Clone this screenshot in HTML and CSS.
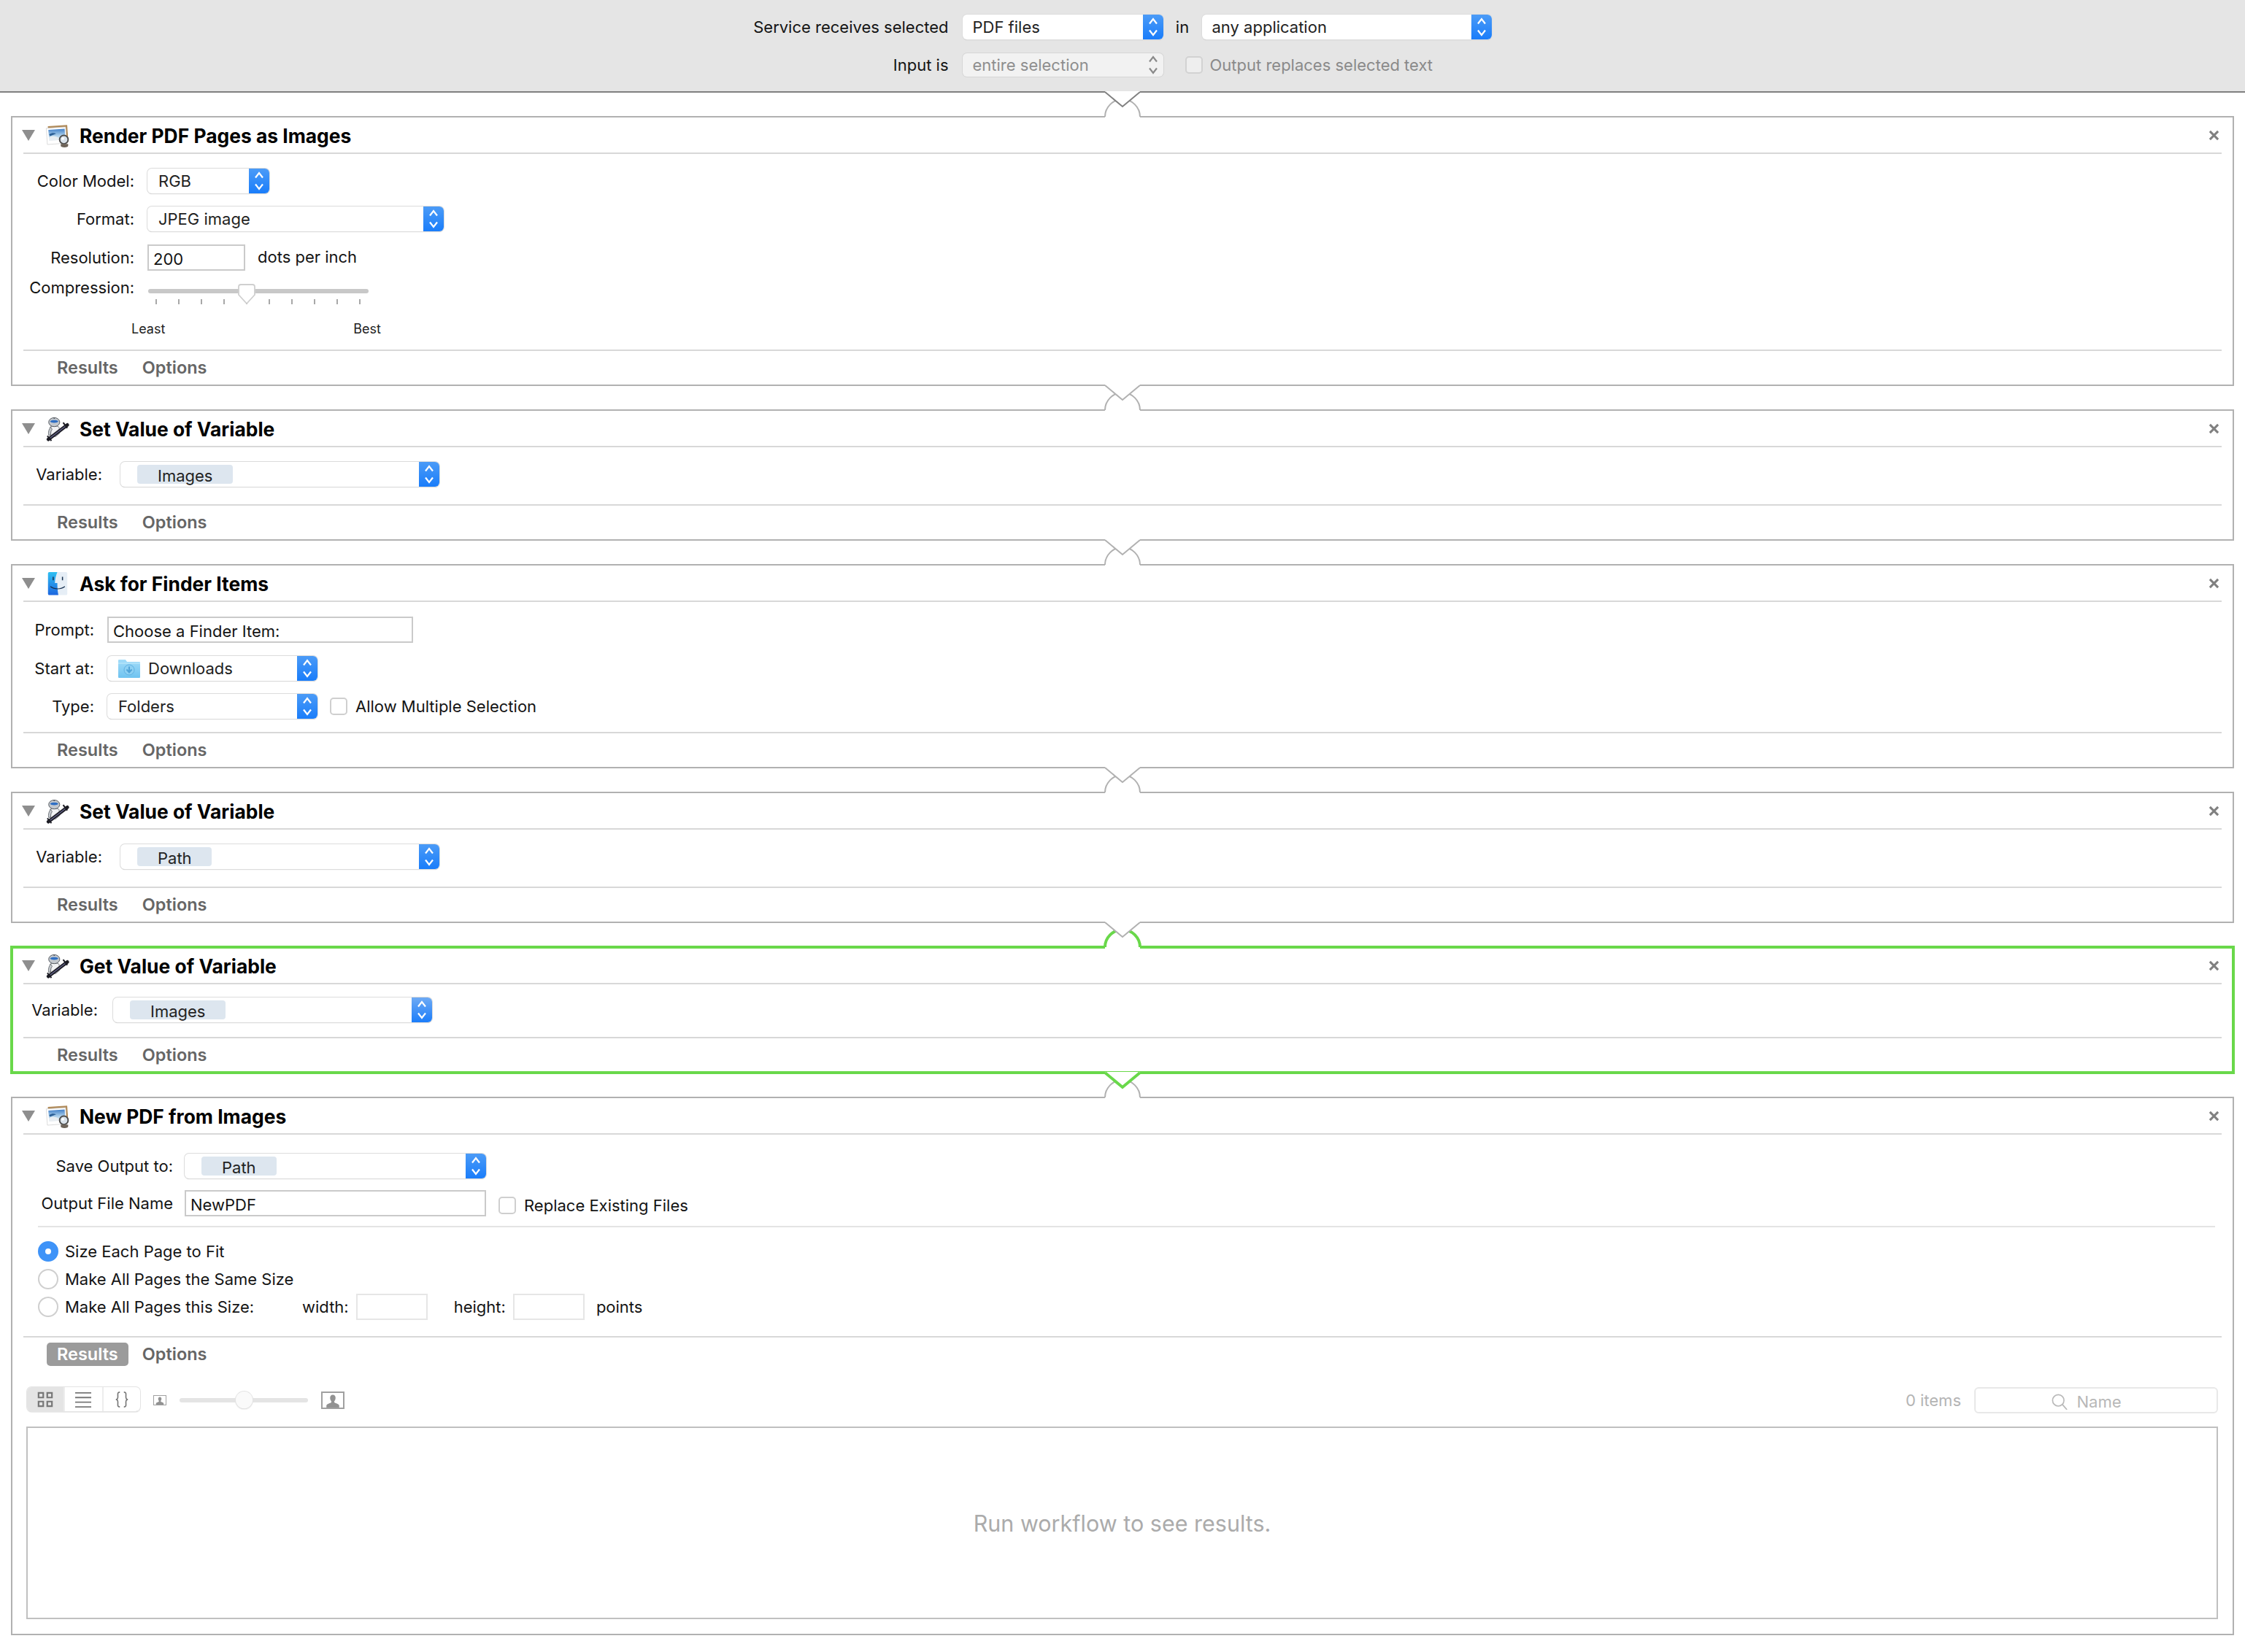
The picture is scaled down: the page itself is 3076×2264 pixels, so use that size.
FILE: index.html
```html
<!DOCTYPE html>
<html lang="en">
<head>
<meta charset="utf-8">
<title>Automator Service</title>
<link rel="stylesheet" href="styles.css">
</head>
<body>
<svg class="sprite" aria-hidden="true">
  <defs>
    <linearGradient id="sky" x1="0" y1="0" x2="0" y2="1"><stop offset="0" stop-color="#3f7fc8"/><stop offset=".55" stop-color="#a9cdea"/><stop offset="1" stop-color="#f2f5f7"/></linearGradient>
    <linearGradient id="fnd" x1="0" y1="0" x2="0" y2="1"><stop offset="0" stop-color="#2fc0f2"/><stop offset="1" stop-color="#1c66e0"/></linearGradient>
    <linearGradient id="fold" x1="0" y1="0" x2="0" y2="1"><stop offset="0" stop-color="#a2dcf9"/><stop offset="1" stop-color="#6fc3f0"/></linearGradient>
    <symbol id="i-photo" viewBox="0 0 32 30">
      <rect x="4" y="2" width="25" height="21" fill="#b08a58" transform="rotate(-4 16 12)"/>
      <rect x="2" y="4.500" width="25" height="21" fill="#fff" stroke="#c9c9c9" stroke-width=".6" transform="rotate(-4 14 15)"/>
      <path d="M4 7.500 25 6l1 14-21 1.500z" fill="url(#sky)"/>
      <path d="M5 17c5-3 9-1 13 1l6 2-19 1.500z" fill="#e9eef2"/>
      <path d="M5 13c4-2 6-2 9-.5l-8 3z" fill="#2b5f96"/>
      <circle cx="24" cy="20" r="5.500" fill="#d9e2ea" stroke="#4c4c4c" stroke-width="1.800"/>
      <circle cx="22.800" cy="18.800" r="1.600" fill="#fff"/>
      <path d="M20 25.500h9.500v2.500a4.700 2 0 0 1-9.500 0z" fill="#6d6359"/>
    </symbol>
    <symbol id="i-robot" viewBox="0 0 32 36">
      <path d="M5 15c4-2 9-2 13 0l1 9-6 5-7-1z" fill="#f1f2f4" stroke="#7d8288" stroke-width="1"/>
      <path d="M6 15c-3 3-4 8-3 12l3-.5c0-3 0-6 2-8z" fill="#c4c8cd" stroke="#555a60" stroke-width=".8"/>
      <ellipse cx="11" cy="8" rx="8" ry="6.500" fill="#c3c8ce" stroke="#4f545a" stroke-width="1"/>
      <path d="M5 6.500c3-2 9-2 12 0-1 3.200-11 3.200-12 0z" fill="#2f6fc4"/>
      <path d="M11 1.500v1.800" stroke="#4f545a" stroke-width="1.500"/>
      <path d="M2.500 33 30 12" stroke="#1c1c24" stroke-width="5" stroke-linecap="round"/>
      <path d="M5 31 27.500 13.800" stroke="#66668e" stroke-width="1.300"/>
      <path d="M24 8.500l6 8" stroke="#1c1c24" stroke-width="2.200"/>
      <path d="M1 28l6 7" stroke="#1c1c24" stroke-width="2"/>
    </symbol>
    <symbol id="i-finder" viewBox="0 0 30 36">
      <rect x="1" y="1" width="28" height="33.500" rx="2" fill="#e6eef6"/>
      <path d="M3 1h11.500c-2 5-3.500 11-3.500 16h3.500c0 6 .5 12 1.500 17.500H3a2 2 0 0 1-2-2V3a2 2 0 0 1 2-2z" fill="url(#fnd)"/>
      <path d="M8.500 8v5M22 8v5" stroke="#17304f" stroke-width="1.600"/>
      <path d="M4.500 22c5.500 4.500 15 4.500 21 0" fill="none" stroke="#17304f" stroke-width="1.200"/>
    </symbol>
    <symbol id="i-step" viewBox="0 0 16 30">
      <path d="M3 10.500 8 4l5 6.500M3 19.500 8 26l5-6.500" fill="none" stroke="currentColor" stroke-width="2.200"/>
    </symbol>
    <symbol id="i-folder" viewBox="0 0 30 26">
      <path d="M0 2a1 1 0 0 1 1-1h9l2 3h17a1 1 0 0 1 1 1v20a1 1 0 0 1-1 1H1a1 1 0 0 1-1-1z" fill="url(#fold)"/>
      <path d="M0 6h30" stroke="#c4ebfc" stroke-width="1"/>
      <circle cx="15" cy="15" r="7" fill="#8dd0f3" stroke="#5fb1e2" stroke-width="1"/>
      <path d="M15 10.500v7M11.500 14.500 15 18.500l3.500-4" fill="none" stroke="#4fa3d8" stroke-width="2"/>
    </symbol>
    <symbol id="i-person" viewBox="0 0 32 24">
      <path d="M16 3c3 0 4.500 2 4.500 5 0 2.500-1 4.500-2 5.500v2c1 1 7 2 8 5v3.500h-21V20.500c1-3 7-4 8-5v-2c-1-1-2-3-2-5.500 0-3 1.500-5 4.500-5z" fill="#929292"/>
    </symbol>
    <symbol id="i-x" viewBox="0 0 16 16">
      <path d="M2 2 14 14M14 2 2 14" fill="none" stroke="#808080" stroke-width="3.200"/>
    </symbol>
  </defs>
</svg>

<header class="band">
  <div class="band-grid">
    <span class="band-label">Service receives selected</span>
    <div class="band-row">
      <div class="sel w-275"><span class="sel-val">PDF files</span><span class="sel-btn"><svg class="step"><use href="#i-step"/></svg></span></div>
      <span class="band-in">in</span>
      <div class="sel w-397"><span class="sel-val">any application</span><span class="sel-btn"><svg class="step"><use href="#i-step"/></svg></span></div>
    </div>
    <span class="band-label">Input is</span>
    <div class="band-row band-row-2">
      <div class="sel sel-off w-275 h-32"><span class="sel-val">entire selection</span><span class="sel-btn"><svg class="step"><use href="#i-step"/></svg></span></div>
      <label class="check check-off"><span class="box"></span>Output replaces selected text</label>
    </div>
  </div>
</header>

<main class="flow">

  <section class="card">
    <svg class="notch n-band" viewBox="0 0 52 38"><rect class="patch" x="2" y="0" width="48" height="38"/><path class="arc" d="M2 35C2 22 13 11 26 11s24 11 24 24"/><path class="vee" d="M2 1 26 21 50 1"/></svg>
    <div class="head">
      <span class="tri"></span>
      <svg class="ico"><use href="#i-photo"/></svg>
      <h2 class="title">Render PDF Pages as Images</h2>
      <svg class="close"><use href="#i-x"/></svg>
    </div>
    <div class="body body-render">
      <div class="row"><span class="lab l-152">Color Model:</span><div class="sel w-167"><span class="sel-val">RGB</span><span class="sel-btn"><svg class="step"><use href="#i-step"/></svg></span></div></div>
      <div class="row"><span class="lab l-152">Format:</span><div class="sel w-406"><span class="sel-val">JPEG image</span><span class="sel-btn"><svg class="step"><use href="#i-step"/></svg></span></div></div>
      <div class="row"><span class="lab l-152">Resolution:</span><input class="inp w-134" value="200"><span class="unit">dots per inch</span></div>
      <div class="row row-slider">
        <span class="lab l-152 lab-slider">Compression:</span>
        <div class="slider">
          <div class="track"><svg class="thumb" viewBox="0 0 24 28"><path d="M1 4a3 3 0 0 1 3-3h16a3 3 0 0 1 3 3v11L12 27 1 15z" fill="#fff" stroke="#cfcfcf" stroke-width="1.800"/></svg></div>
          <div class="ticks"><i></i><i></i><i></i><i></i><i></i><i></i><i></i><i></i><i></i><i></i></div>
          <div class="ends"><span>Least</span><span>Best</span></div>
        </div>
      </div>
    </div>
    <div class="foot"><span class="tab">Results</span><span class="tab">Options</span></div>
  </section>

  <section class="card">
    <svg class="notch" viewBox="0 0 52 38"><rect class="patch" x="2" y="0" width="48" height="38"/><path class="arc" d="M2 35C2 22 13 11 26 11s24 11 24 24"/><path class="vee" d="M2 1 26 21 50 1"/></svg>
    <div class="head">
      <span class="tri"></span>
      <svg class="ico"><use href="#i-robot"/></svg>
      <h2 class="title">Set Value of Variable</h2>
      <svg class="close"><use href="#i-x"/></svg>
    </div>
    <div class="body body-var">
      <div class="row g-25"><span class="lab l-108">Variable:</span><div class="sel w-437"><span class="token">Images</span><span class="sel-btn"><svg class="step"><use href="#i-step"/></svg></span></div></div>
    </div>
    <div class="foot"><span class="tab">Results</span><span class="tab">Options</span></div>
  </section>

  <section class="card">
    <svg class="notch" viewBox="0 0 52 38"><rect class="patch" x="2" y="0" width="48" height="38"/><path class="arc" d="M2 35C2 22 13 11 26 11s24 11 24 24"/><path class="vee" d="M2 1 26 21 50 1"/></svg>
    <div class="head">
      <span class="tri"></span>
      <svg class="ico"><use href="#i-finder"/></svg>
      <h2 class="title">Ask for Finder Items</h2>
      <svg class="close"><use href="#i-x"/></svg>
    </div>
    <div class="body body-ask">
      <div class="row"><span class="lab l-97">Prompt:</span><input class="inp w-419" value="Choose a Finder Item:"></div>
      <div class="row"><span class="lab l-97">Start at:</span><div class="sel w-288"><svg class="folder"><use href="#i-folder"/></svg><span class="sel-val sel-val-ico">Downloads</span><span class="sel-btn"><svg class="step"><use href="#i-step"/></svg></span></div></div>
      <div class="row"><span class="lab l-97">Type:</span><div class="sel w-288"><span class="sel-val sel-val-left">Folders</span><span class="sel-btn"><svg class="step"><use href="#i-step"/></svg></span></div><label class="check"><span class="box"></span>Allow Multiple Selection</label></div>
    </div>
    <div class="foot"><span class="tab">Results</span><span class="tab">Options</span></div>
  </section>

  <section class="card">
    <svg class="notch" viewBox="0 0 52 38"><rect class="patch" x="2" y="0" width="48" height="38"/><path class="arc" d="M2 35C2 22 13 11 26 11s24 11 24 24"/><path class="vee" d="M2 1 26 21 50 1"/></svg>
    <div class="head">
      <span class="tri"></span>
      <svg class="ico"><use href="#i-robot"/></svg>
      <h2 class="title">Set Value of Variable</h2>
      <svg class="close"><use href="#i-x"/></svg>
    </div>
    <div class="body body-var">
      <div class="row g-25"><span class="lab l-108">Variable:</span><div class="sel w-437"><span class="token token-path">Path</span><span class="sel-btn"><svg class="step"><use href="#i-step"/></svg></span></div></div>
    </div>
    <div class="foot"><span class="tab">Results</span><span class="tab">Options</span></div>
  </section>

  <section class="card card-on">
    <svg class="notch n-arc-on" viewBox="0 0 52 38"><rect class="patch" x="2" y="0" width="48" height="38"/><path class="arc" d="M2 35C2 22 13 11 26 11s24 11 24 24"/><path class="vee" d="M2 1 26 21 50 1"/></svg>
    <div class="head">
      <span class="tri"></span>
      <svg class="ico"><use href="#i-robot"/></svg>
      <h2 class="title">Get Value of Variable</h2>
      <svg class="close"><use href="#i-x"/></svg>
    </div>
    <div class="body body-get">
      <div class="row g-21"><span class="lab l-102">Variable:</span><div class="sel sel-light w-437"><span class="token token-get">Images</span><span class="sel-btn"><svg class="step"><use href="#i-step"/></svg></span></div></div>
    </div>
    <div class="foot"><span class="tab">Results</span><span class="tab">Options</span></div>
  </section>

  <section class="card">
    <svg class="notch n-vee-on" viewBox="0 0 52 38"><rect class="patch" x="2" y="0" width="48" height="38"/><path class="arc" d="M2 35C2 22 13 11 26 11s24 11 24 24"/><path class="vee" d="M2 1 26 21 50 1"/></svg>
    <div class="head">
      <span class="tri"></span>
      <svg class="ico"><use href="#i-photo"/></svg>
      <h2 class="title">New PDF from Images</h2>
      <svg class="close"><use href="#i-x"/></svg>
    </div>
    <div class="body body-new">
      <div class="row g-16"><span class="lab l-205">Save Output to:</span><div class="sel w-413"><span class="token token-new">Path</span><span class="sel-btn"><svg class="step"><use href="#i-step"/></svg></span></div></div>
      <div class="row g-16 row-name"><span class="lab l-205">Output File Name</span><input class="inp w-413" value="NewPDF"><label class="check check-name"><span class="box"></span>Replace Existing Files</label></div>
      <div class="rule"></div>
      <div class="radios">
        <label class="radio"><span class="dot dot-on"></span>Size Each Page to Fit</label>
        <label class="radio"><span class="dot"></span>Make All Pages the Same Size</label>
        <label class="radio"><span class="dot"></span><span class="radio-long">Make All Pages this Size:</span><span class="size-lab">width:</span><input class="inp inp-soft w-98"><span class="size-lab size-gap">height:</span><input class="inp inp-soft w-98"><span class="size-lab size-pts">points</span></label>
      </div>
    </div>
    <div class="foot foot-on"><span class="tab tab-on">Results</span><span class="tab">Options</span></div>
    <div class="tools">
      <div class="seg">
        <span class="seg-i seg-on"><svg class="seg-svg" viewBox="0 0 24 24"><path d="M2 2h7v7H2zM15 2h7v7h-7zM2 15h7v7H2zM15 15h7v7h-7z" fill="none" stroke="#777" stroke-width="2.400"/></svg></span>
        <span class="seg-i"><svg class="seg-svg" viewBox="0 0 24 24"><path d="M0 2h24M0 9h24M0 16h24M0 23h24" stroke="#777" stroke-width="2"/></svg></span>
        <span class="seg-i seg-last"><svg class="seg-svg" viewBox="0 0 24 24"><path d="M9 1C5 1 6 4 6 8c0 3-1 4-3 4 2 0 3 1 3 4 0 4-1 7 3 7M15 1c4 0 3 3 3 7 0 3 1 4 3 4-2 0-3 1-3 4 0 4 1 7-3 7" fill="none" stroke="#777" stroke-width="1.800"/></svg></span>
      </div>
      <span class="pic pic-s"><svg class="pic-svg"><use href="#i-person"/></svg></span>
      <div class="zoom"><span class="zoom-thumb"></span></div>
      <span class="pic pic-b"><svg class="pic-svg"><use href="#i-person"/></svg></span>
      <span class="count">0 items</span>
      <div class="search"><svg class="mag" viewBox="0 0 24 24"><circle cx="10" cy="10" r="8.500" fill="none" stroke="#b8b8b8" stroke-width="1.800"/><path d="m16 16 7 8" stroke="#b8b8b8" stroke-width="1.800"/></svg><span>Name</span></div>
    </div>
    <div class="results">Run workflow to see results.</div>
  </section>

</main>
</body>
</html>
```

FILE: styles.css
```css
* { box-sizing: border-box; }
html, body { margin: 0; padding: 0; background: #fff; }
body {
  width: 3076px;
  height: 2264px;
  overflow: hidden;
  font-family: Inter, "Liberation Sans", sans-serif;
  font-size: 22px;
  color: #141414;
}
.sprite { position: absolute; width: 0; height: 0; }

/* top band */
.band {
  height: 127px;
  background: #e5e5e5;
  border-bottom: 2px solid #808080;
  padding-top: 20px;
}
.band-grid {
  display: grid;
  grid-template-columns: 267px 725px;
  justify-content: center;
  column-gap: 19px;
  row-gap: 19px;
  align-items: center;
  justify-items: end;
}
.band-label { white-space: nowrap; }
.band-row { display: flex; align-items: center; justify-self: start; gap: 17px; }
.band-row-2 { gap: 30px; }
.band-in { width: 19px; text-align: center; }
.band .sel-val { padding-left: 14px; }

/* workflow */
.flow {
  display: flex;
  flex-direction: column;
  gap: 32px;
  padding: 32px 15px 0 15px;
}
.card {
  position: relative;
  background: #fff;
  border: 2px solid #b1b1b1;
}
.card-on {
  border-color: #69d84a;
  box-shadow: 0 0 0 1px #69d84a, inset 0 0 0 1px #69d84a;
}

/* connector between cards */
.notch {
  position: absolute;
  left: 1495px;
  top: -36px;
  width: 52px;
  height: 38px;
  overflow: visible;
  z-index: 2;
}
.notch path { fill: none; }
.patch { fill: #fff; }
.notch .arc { stroke: #b1b1b1; stroke-width: 2; }
.notch .vee { stroke: #b1b1b1; stroke-width: 2; fill: #fff; }
.n-band .vee { stroke: #808080; }
.n-arc-on .arc { stroke: #69d84a; stroke-width: 4; }
.n-vee-on .vee { stroke: #69d84a; stroke-width: 4; }

/* card header */
.head {
  display: flex;
  align-items: center;
  height: 50px;
  padding: 0 18px 0 13px;
  position: relative;
}
.head::after {
  content: "";
  position: absolute;
  left: 15px;
  right: 15px;
  bottom: 0;
  height: 2px;
  background: #d8d8d8;
}
.tri {
  width: 0;
  height: 0;
  border-left: 9px solid transparent;
  border-right: 9px solid transparent;
  border-top: 15px solid #8e8e8e;
  margin-bottom: 1px;
}
.ico { width: 34px; height: 34px; margin: 0 13px 0 14px; }
.title {
  margin: 0;
  font-size: 26.4px;
  font-weight: 700;
  color: #000;
}
.close {
  margin-left: auto;
  width: 15px;
  height: 15px;
  margin-bottom: 2px;
}

/* card body */
.body { display: flex; flex-direction: column; gap: 18px; padding-left: 15px; }
.body-render { height: 268px; padding-top: 20px; gap: 18px; }
.body-var { height: 78px; padding-top: 20px; }
.body-ask { height: 178px; padding-top: 20px; }
.body-get { height: 72px; padding-top: 18px; }
.body-new { height: 276px; padding-top: 26px; gap: 16px; }

.row { display: flex; align-items: center; gap: 18px; }
.g-25 { gap: 25px; }
.g-21 { gap: 21px; }
.g-16 { gap: 16px; }
.lab { text-align: right; white-space: nowrap; flex: none; }
.l-152 { width: 152px; }
.l-108 { width: 108px; }
.l-97 { width: 97px; }
.l-102 { width: 102px; }
.l-205 { width: 205px; }
.unit { margin-left: -1px; margin-top: -2px; }

/* popup */
.sel {
  position: relative;
  display: flex;
  align-items: center;
  height: 34px;
  flex: none;
  background: #fff;
  border-radius: 6px;
  box-shadow: 0 0 0 1px #dcdcdc, 0 2px 1px -1px #a8a8a8;
}
.w-275 { width: 275px; }
.w-397 { width: 397px; }
.w-167 { width: 167px; }
.w-406 { width: 406px; }
.w-437 { width: 437px; }
.w-288 { width: 288px; }
.w-413 { width: 413px; }
.h-32 { height: 32px; }
.sel-val { padding-left: 15px; flex: 1; white-space: nowrap; color: #222; }
.sel-val-ico { padding-left: 11px; }
.sel-btn {
  margin-left: auto;
  width: 28px;
  align-self: stretch;
  flex: none;
  display: flex;
  align-items: center;
  justify-content: center;
  color: #fff;
  background: linear-gradient(#4b9bf7, #1a7dfa);
  border-radius: 0 6px 6px 0;
}
.sel-light .sel-btn { background: linear-gradient(#6eaaf4, #1b7dfa); }
.step { width: 16px; height: 30px; }
.sel-off { background: #f2f2f2; box-shadow: 0 0 0 1px #d6d6d6; color: #8e8e8e; }
.sel-off .sel-val { color: #8e8e8e; }
.sel-off .sel-btn { background: none; color: #8a8a8a; }
.folder { width: 30px; height: 26px; margin-left: 15px; flex: none; }
.token {
  margin-left: 23px;
  height: 26px;
  width: 131px;
  padding-left: 28px;
  line-height: 30px;
  background: #dde6ef;
  border-radius: 4px;
  color: #222;
}
.token-path { width: 102px; }
.token-new { width: 103px; }

/* fields */
.inp {
  height: 36px;
  flex: none;
  padding: 3px 0 0 6px;
  font: inherit;
  color: #141414;
  background: #fff;
  border: 2px solid #cacaca;
  border-radius: 0;
  outline: none;
}
.w-134 { width: 134px; }
.w-419 { width: 419px; }
.w-98 { width: 98px; }
.inp-soft { border-color: #e6e6e6; }

/* checkbox and radios */
.check { display: flex; align-items: center; gap: 11px; white-space: nowrap; }
.box {
  width: 24px;
  height: 24px;
  flex: none;
  background: #fff;
  border: 2px solid #cfcfcf;
  border-radius: 5px;
}
.body-ask .check { margin-left: -1px; margin-top: -1px; }
.check-off { color: #8a8a8a; gap: 10px; }
.check-off .box { background: #eee; border-color: #d2d2d2; }
.check-name { margin-left: 1px; margin-top: 6px; }
.rule { height: 2px; background: #e4e4e4; margin: -3px 24px 1px 20px; }
.radios { display: flex; flex-direction: column; gap: 10px; padding-left: 20px; margin-top: 2px; }
.radio { display: flex; align-items: center; height: 28px; white-space: nowrap; }
.dot {
  width: 28px;
  height: 28px;
  flex: none;
  margin-right: 9px;
  border-radius: 50%;
  background: #fff;
  border: 2px solid #cfcfcf;
}
.dot-on {
  border: 10px solid #3e93f8;
  background: #fff;
}
.radio-long { width: 325px; }
.size-lab { margin-right: 10px; }
.size-gap { margin-left: 36px; }
.size-pts { margin-left: 16px; margin-right: 0; }

/* slider */
.row-slider { align-items: flex-start; margin-top: -2px; }
.lab-slider { margin-top: -6px; width: 152px; }
.slider { width: 342px; margin-left: -22px; position: relative; }
.track {
  position: relative;
  height: 6px;
  margin: 9px 17px 0 23px;
  background: #c8c8c8;
  border-radius: 3px;
}
.thumb {
  position: absolute;
  left: 123px;
  top: -7px;
  width: 24px;
  height: 28px;
}
.ticks {
  display: flex;
  justify-content: space-between;
  margin: 8px 28px 0 33px;
}
.ticks i { width: 2px; height: 7px; background: #a8a8a8; }
.ends {
  display: flex;
  justify-content: space-between;
  margin-top: 23px;
  font-size: 18px;
  color: #222;
}

/* footer */
.foot {
  display: flex;
  align-items: center;
  gap: 5px;
  height: 48px;
  padding: 2px 0 0 47px;
  position: relative;
}
.foot::before {
  content: "";
  position: absolute;
  left: 15px;
  right: 15px;
  top: 0;
  height: 2px;
  background: #d8d8d8;
}
.tab {
  padding: 0 14px;
  height: 32px;
  line-height: 32px;
  font-size: 23.5px;
  font-weight: 600;
  color: #666;
  border-radius: 5px;
}
.tab-on { background: #9b9b9b; color: #fff; }
.foot-on { align-items: flex-start; padding-top: 9px; }

/* results toolbar */
.tools {
  display: flex;
  align-items: center;
  height: 36px;
  margin: 22px 20px 0 20px;
}
.seg {
  display: flex;
  width: 155px;
  height: 33px;
  border-radius: 6px;
  box-shadow: 0 0 0 1px #e4e4e4, 0 2px 2px -1px #bbb;
  overflow: hidden;
  margin-top: -3px;
}
.seg-i { flex: 1; display: flex; align-items: center; justify-content: center; border-right: 2px solid #ededed; }
.seg-last { border-right: 0; }
.seg-on { background: #e4e4e4; }
.seg-svg { width: 22px; height: 22px; }
.pic { display: flex; flex: none; background: #fff; border: 2px solid #a0a0a0; overflow: hidden; align-items: flex-end; justify-content: center; }
.pic-s { width: 18px; height: 14px; margin-left: 18px; border-width: 1.500px; }
.pic-b { width: 32px; height: 24px; margin-left: 18px; }
.pic-svg { width: 100%; height: 100%; }
.zoom { position: relative; width: 176px; height: 6px; margin-left: 18px; background: #e4e4e4; border-radius: 3px; }
.zoom-thumb {
  position: absolute;
  left: 77px;
  top: -9px;
  width: 23px;
  height: 23px;
  background: #fafafa;
  border-radius: 50%;
  box-shadow: 0 0 0 1px #e4e4e4, 0 1px 2px #ccc;
}
.count { margin-left: auto; color: #b4b4b4; margin-right: 18px; }
.search {
  display: flex;
  align-items: center;
  justify-content: center;
  gap: 12px;
  width: 334px;
  height: 36px;
  color: #b8b8b8;
  border: 2px solid #e8e8e8;
  border-radius: 6px;
  padding: 3px 20px 0 0;
}
.mag { width: 22px; height: 22px; margin-left: -6px; }
.results {
  display: flex;
  align-items: center;
  justify-content: center;
  height: 264px;
  margin: 18px 20px 20px 19px;
  border: 2px solid #c0c0c0;
  font-size: 30.5px;
  color: #ababab;
}
```
